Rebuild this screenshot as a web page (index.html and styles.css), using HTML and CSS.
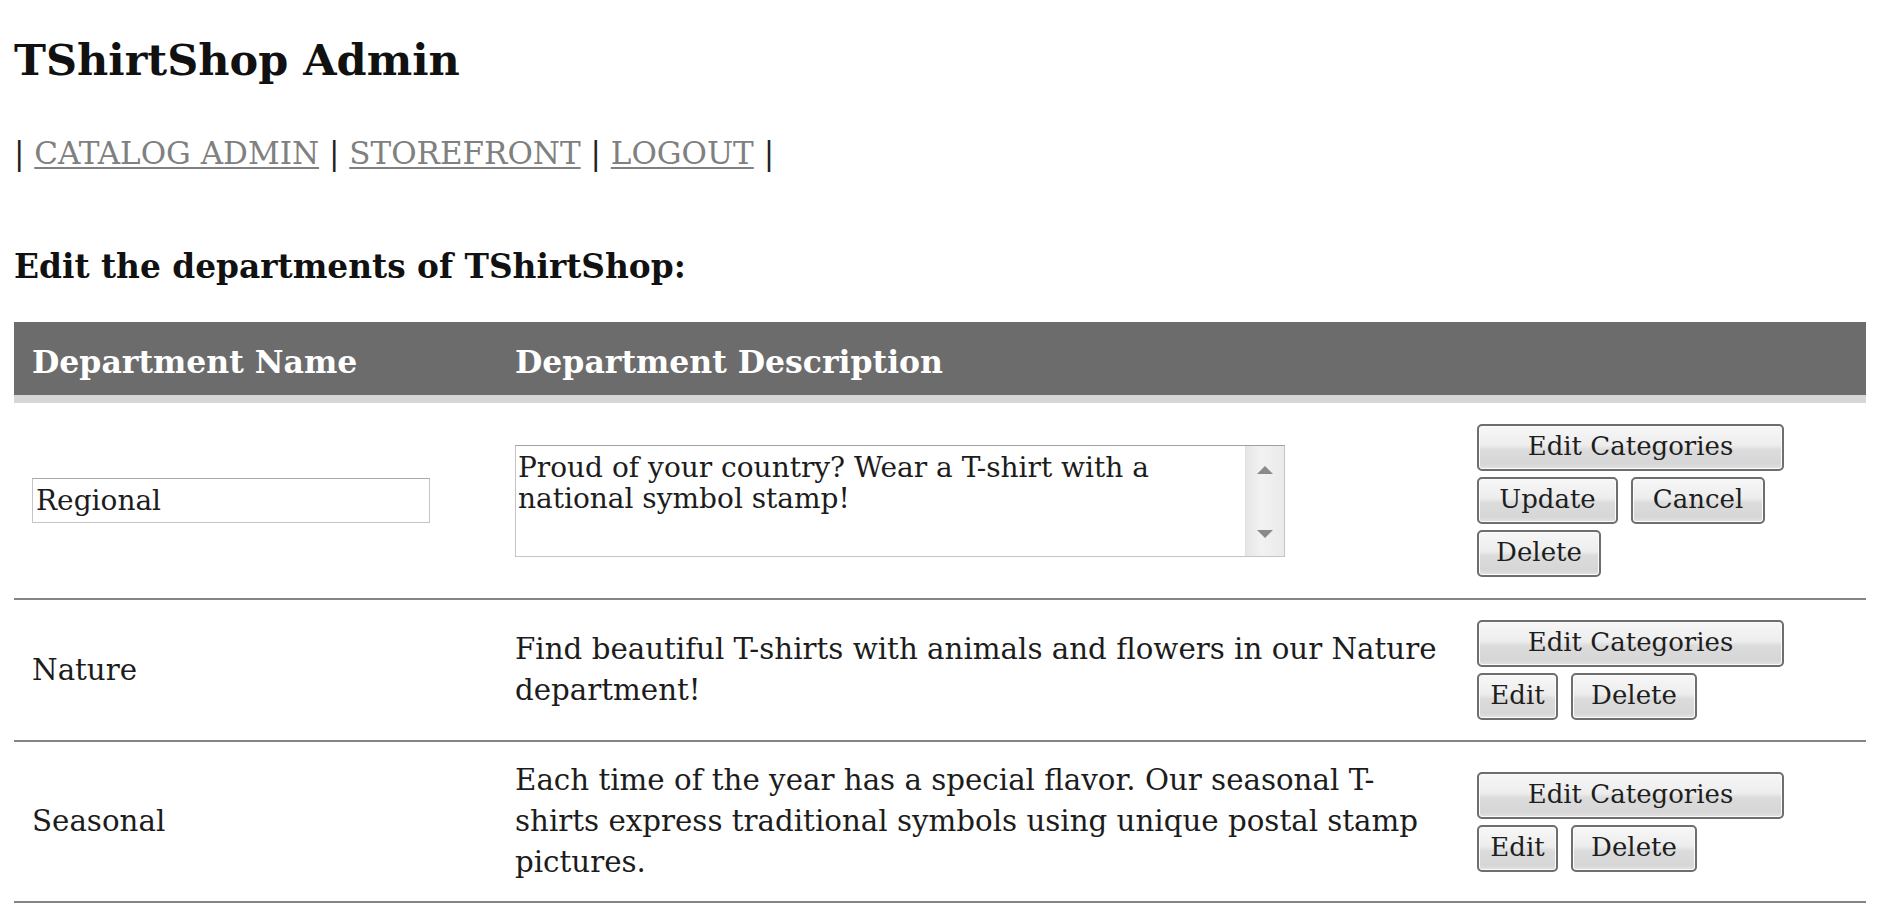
FILE: index.html
```html
<!DOCTYPE html>
<html lang="en">
<head>
<meta charset="utf-8">
<title>TShirtShop Admin</title>
<link rel="stylesheet" href="styles.css">
</head>
<body>
<div class="page">
  <h1 class="title">TShirtShop Admin</h1>
  <nav class="nav">
    <span class="sep">|</span> <a href="#">CATALOG ADMIN</a> <span class="sep">|</span> <a href="#">STOREFRONT</a> <span class="sep">|</span> <a href="#">LOGOUT</a> <span class="sep">|</span>
  </nav>
  <h2 class="subtitle">Edit the departments of TShirtShop:</h2>
  <table class="grid">
    <colgroup>
      <col class="c-name">
      <col class="c-desc">
      <col class="c-act">
    </colgroup>
    <thead>
      <tr>
        <th>Department Name</th>
        <th>Department Description</th>
        <th></th>
      </tr>
    </thead>
    <tbody>
      <tr>
        <td><input class="name-input" type="text" value="Regional"></td>
        <td class="desc">
          <div class="ta-box">
            <textarea class="ta">Proud of your country? Wear a T-shirt with a national symbol stamp!</textarea>
            <div class="sbar">
              <svg width="16" height="8" viewBox="0 0 16 8"><path d="M8 0 L16 8 L0 8 Z" fill="#8a8a8a"/></svg>
              <svg width="16" height="8" viewBox="0 0 16 8"><path d="M0 0 L16 0 L8 8 Z" fill="#8a8a8a"/></svg>
            </div>
          </div>
        </td>
        <td>
          <div class="btns btns-edit">
            <button class="btn w-cat">Edit Categories</button>
            <button class="btn w-upd">Update</button>
            <button class="btn w-can">Cancel</button>
            <button class="btn w-del">Delete</button>
          </div>
        </td>
      </tr>
      <tr>
        <td>Nature</td>
        <td class="desc">Find beautiful T-shirts with animals and flowers in our Nature department!</td>
        <td>
          <div class="btns">
            <button class="btn w-cat">Edit Categories</button>
            <button class="btn w-edit">Edit</button>
            <button class="btn w-del2">Delete</button>
          </div>
        </td>
      </tr>
      <tr>
        <td>Seasonal</td>
        <td class="desc">Each time of the year has a special flavor. Our seasonal T-shirts express traditional symbols using unique postal stamp pictures.</td>
        <td>
          <div class="btns">
            <button class="btn w-cat">Edit Categories</button>
            <button class="btn w-edit">Edit</button>
            <button class="btn w-del2">Delete</button>
          </div>
        </td>
      </tr>
    </tbody>
  </table>
</div>
</body>
</html>
```
FILE: styles.css
```css
html, body {
  margin: 0;
  padding: 0;
  background: #ffffff;
}
body {
  font-family: "DejaVu Serif", "Liberation Serif", serif;
  color: #1c1c1c;
}
.page {
  padding: 35px 24px 0 14px;
}
.title {
  margin: 0;
  font-size: 43px;
  line-height: 50px;
  font-weight: bold;
  color: #111;
}
.nav {
  margin-top: 48px;
  font-size: 31px;
  line-height: 40px;
  color: #222;
}
.nav a {
  color: #808080;
  text-decoration: underline;
  text-decoration-thickness: 2px;
  text-underline-offset: 3px;
}
.subtitle {
  margin: 74px 0 0 0;
  font-size: 32.8px;
  line-height: 40px;
  font-weight: bold;
  color: #111;
}
.grid {
  margin-top: 35px;
  width: 1852px;
  border-collapse: collapse;
  table-layout: fixed;
}
.c-name { width: 483px; }
.c-desc { width: 962px; }
.c-act { width: 407px; }
.grid th {
  background: #6c6c6c;
  color: #ffffff;
  font-size: 31.5px;
  line-height: 41px;
  font-weight: bold;
  text-align: left;
  padding: 19px 18px 13px 18px;
  border-bottom: 8px solid #d6d6d6;
}
.grid td {
  font-size: 29.3px;
  line-height: 41px;
  padding: 18px;
  vertical-align: middle;
  border-bottom: 2px solid #858585;
}
.grid td.desc {
  padding-right: 16px;
}
.name-input {
  display: block;
  box-sizing: border-box;
  width: 398px;
  height: 45px;
  margin: 0;
  padding: 0 3px;
  border: 1px solid #c4c4c4;
  border-top-color: #a8a8a8;
  font-family: "DejaVu Serif", serif;
  font-size: 28px;
  color: #1c1c1c;
  background: #fff;
}
.ta-box {
  display: flex;
  box-sizing: border-box;
  width: 770px;
  height: 112px;
  border: 1px solid #c4c4c4;
  border-top-color: #a0a0a0;
  background: #fff;
}
.ta {
  flex: 1;
  margin: 0;
  padding: 6px 4px 0 2px;
  border: none;
  resize: none;
  overflow: hidden;
  font-family: "DejaVu Serif", serif;
  font-size: 28px;
  line-height: 31.5px;
  color: #1c1c1c;
  background: #fff;
}
.sbar {
  width: 38px;
  display: flex;
  flex-direction: column;
  justify-content: space-between;
  align-items: center;
  padding: 20px 0 18px;
  background: linear-gradient(to right, #e6e6e6, #f2f2f2 40%, #eaeaea 100%);
  border-left: 1px solid #e0e0e0;
}
.btns {
  display: flex;
  flex-wrap: wrap;
  gap: 6px 13px;
  padding: 2px 0;
}
.btns-edit {
  padding: 3px 0;
}
.btn {
  box-sizing: border-box;
  height: 47px;
  margin: 0;
  padding: 0 0 3px 0;
  border: 2px solid #6e6e6e;
  border-radius: 5px;
  background: linear-gradient(to bottom, #f7f7f7 0%, #ededed 45%, #dcdcdc 55%, #d6d6d6 88%, #e2e2e2 100%);
  box-shadow: inset 0 0 0 1px #fbfbfb;
  font-family: "DejaVu Serif", serif;
  font-size: 26px;
  line-height: 40px;
  color: #1e1e1e;
  text-align: center;
}
.w-cat { width: 307px; }
.w-upd { width: 141px; }
.w-can { width: 134px; }
.w-del { width: 124px; }
.w-del2 { width: 126px; }
.w-edit { width: 81px; }
```
